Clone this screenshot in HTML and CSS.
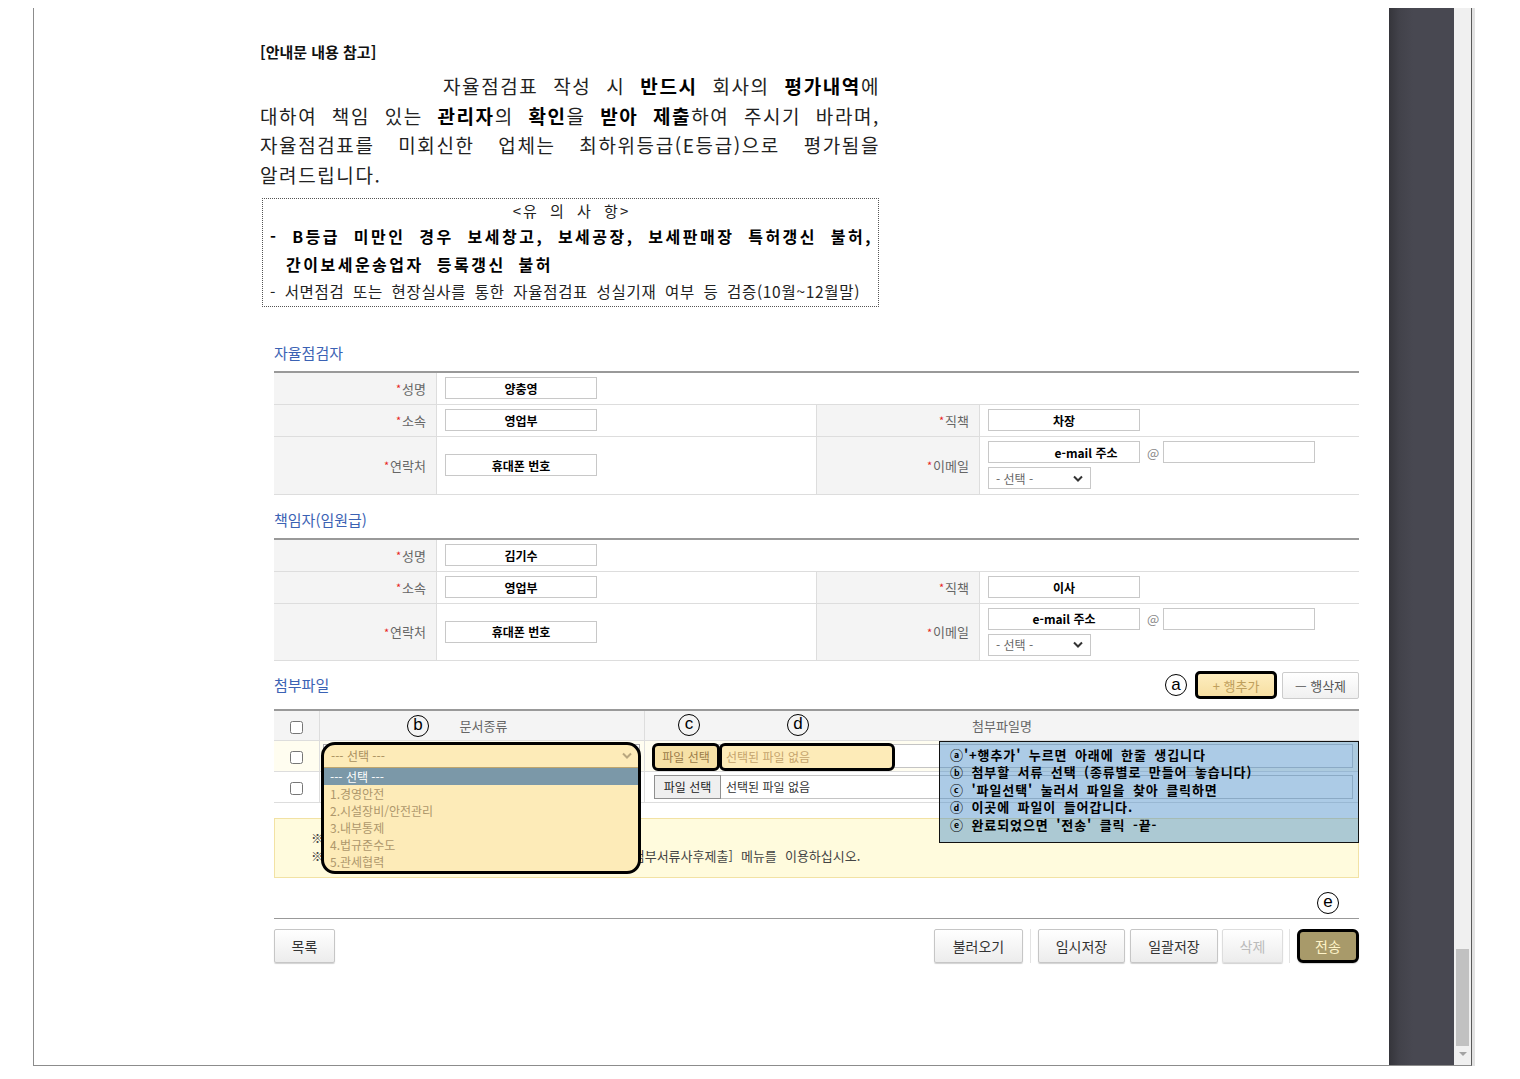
FILE: index.html
```html
<!DOCTYPE html>
<html lang="ko">
<head>
<meta charset="utf-8">
<title>자율점검표</title>
<link rel="stylesheet" href="styles.css">
</head>
<body>
<div class="frame">
  <div class="content">
    <div class="main">
      <div class="intro">
        <p class="intro-title">[안내문 내용 참고]</p>
        <div class="para">
          <div class="pl first">자율점검표 작성 시 <b>반드시</b> 회사의 <b>평가내역</b>에</div>
          <div class="pl">대하여 책임 있는 <b>관리자</b>의 <b>확인</b>을 <b>받아 제출</b>하여 주시기 바라며,</div>
          <div class="pl">자율점검표를 미회신한 업체는 최하위등급(E등급)으로 평가됨을</div>
          <div class="pl last">알려드립니다.</div>
        </div>
        <div class="caution">
          <div class="c-title">&lt;유 의 사 항&gt;</div>
          <div class="c-bold just">- B등급 미만인 경우 보세창고, 보세공장, 보세판매장 특허갱신 불허,</div>
          <div class="c-bold indent">간이보세운송업자 등록갱신 불허</div>
          <div class="c-norm">- 서면점검 또는 현장실사를 통한 자율점검표 성실기재 여부 등 검증(10월~12월말)</div>
        </div>
      </div>

      <div class="form">
        <h3 class="sec-title">자율점검자</h3>
        <div class="ftable">
          <div class="lab"><i>*</i>성명</div>
          <div class="val span3"><input class="inp" type="text" value="양충영"></div>
          <div class="lab"><i>*</i>소속</div>
          <div class="val bd"><input class="inp" type="text" value="영업부"></div>
          <div class="lab"><i>*</i>직책</div>
          <div class="val"><input class="inp" type="text" value="차장"></div>
          <div class="lab"><i>*</i>연락처</div>
          <div class="val bd"><input class="inp" type="text" value="휴대폰 번호"></div>
          <div class="lab"><i>*</i>이메일</div>
          <div class="val email">
            <div class="erow"><input class="inp shift" type="text" value="e-mail 주소"><span class="at">@</span><input class="inp" type="text" value=""></div>
            <div class="sel"><span>- 선택 -</span><svg width="10" height="7" viewBox="0 0 10 7"><path d="M1 1.5 L5 5.5 L9 1.5" fill="none" stroke="#333" stroke-width="2"/></svg></div>
          </div>
        </div>

        <h3 class="sec-title s2">책임자(임원급)</h3>
        <div class="ftable t2">
          <div class="lab"><i>*</i>성명</div>
          <div class="val span3"><input class="inp" type="text" value="김기수"></div>
          <div class="lab"><i>*</i>소속</div>
          <div class="val bd"><input class="inp" type="text" value="영업부"></div>
          <div class="lab"><i>*</i>직책</div>
          <div class="val"><input class="inp" type="text" value="이사"></div>
          <div class="lab"><i>*</i>연락처</div>
          <div class="val bd"><input class="inp" type="text" value="휴대폰 번호"></div>
          <div class="lab"><i>*</i>이메일</div>
          <div class="val email">
            <div class="erow"><input class="inp" type="text" value="e-mail 주소"><span class="at">@</span><input class="inp" type="text" value=""></div>
            <div class="sel"><span>- 선택 -</span><svg width="10" height="7" viewBox="0 0 10 7"><path d="M1 1.5 L5 5.5 L9 1.5" fill="none" stroke="#333" stroke-width="2"/></svg></div>
          </div>
        </div>

        <div class="ahead-row">
          <h3 class="sec-title flat">첨부파일</h3>
          <div class="btns">
            <span class="circ">a</span>
            <button class="btn-add" type="button">+ 행추가</button>
            <button class="btn-del" type="button">— 행삭제</button>
          </div>
        </div>

        <div class="abody">
          <div class="atable">
            <div class="ch hd"><input type="checkbox" class="cb"></div>
            <div class="dt hd t">문서종류</div>
            <div class="hd t">첨부파일명</div>

            <div class="ch r1"><input type="checkbox" class="cb"></div>
            <div class="dt r1"><div class="asel"><span>--- 선택 ---</span></div></div>
            <div class="fc r1"><div class="file"><span class="fbtn">파일 선택</span><span class="fname">선택된 파일 없음</span></div></div>

            <div class="ch"><input type="checkbox" class="cb"></div>
            <div class="dt"><div class="asel"></div></div>
            <div class="fc"><div class="file"><span class="fbtn dk">파일 선택</span><span class="fname">선택된 파일 없음</span></div></div>
          </div>

          <div class="notice">
            <p>※ 첨부파일은 최대 10MB까지 등록 가능합니다.</p>
            <p>※ 자율점검표 제출 기한 이후 추가로 제출할 서류는 [첨부서류사후제출] 메뉴를 이용하십시오.</p>
          </div>

          <span class="circ abs cb-b">b</span>
          <span class="circ abs cb-c">c</span>
          <span class="circ abs cb-d">d</span>

          <div class="dd">
            <div class="dd-sel"><span>--- 선택 ---</span><svg width="10" height="7" viewBox="0 0 10 7"><path d="M1 1.5 L5 5.5 L9 1.5" fill="none" stroke="#b9a77f" stroke-width="2"/></svg></div>
            <div class="dd-list">
              <div class="on">--- 선택 ---</div>
              <div>1.경영안전</div>
              <div>2.시설장비/안전관리</div>
              <div>3.내부통제</div>
              <div>4.법규준수도</div>
              <div>5.관세협력</div>
            </div>
          </div>
          <div class="ann ann-c">파일 선택</div>
          <div class="ann ann-d">선택된 파일 없음</div>

          <div class="blue">
            <div>ⓐ'+행추가' 누르면 아래에 한줄 생깁니다</div>
            <div>ⓑ 첨부할 서류 선택 (종류별로 만들어 놓습니다)</div>
            <div>ⓒ '파일선택' 눌러서 파일을 찾아 클릭하면</div>
            <div>ⓓ 이곳에 파일이 들어갑니다.</div>
            <div>ⓔ 완료되었으면 '전송' 클릭 -끝-</div>
          </div>
        </div>

        <div class="erow2"><span class="circ">e</span></div>
        <div class="btnbar">
          <button class="bt w-list" type="button">목록</button>
          <div class="rgroup">
            <button class="bt w-load" type="button">불러오기</button>
            <span class="sep"></span>
            <button class="bt w-tmp" type="button">임시저장</button>
            <button class="bt w-all" type="button">일괄저장</button>
            <button class="bt w-del dis" type="button">삭제</button>
            <span class="sep s2"></span>
            <button class="bt w-send send" type="button">전송</button>
          </div>
        </div>
      </div>
    </div>
  </div>
  <div class="dark"></div>
  <div class="track">
    <div class="thumb"></div>
    <div class="arrow"></div>
  </div>
</div>
</body>
</html>
```

FILE: styles.css
```css
* { box-sizing: border-box; }

body {
  margin: 0;
  background: #fff;
  font-family: "Noto Sans CJK KR", "Noto Sans", sans-serif;
  color: #333;
}

button, input {
  font-family: "Noto Sans CJK KR", "Noto Sans", sans-serif;
}

.frame {
  margin: 8px 0 0 33px;
  width: 1439px;
  height: 1058px;
  display: flex;
  border-left: 1px solid #8c8c8c;
  border-bottom: 1px solid #8c8c8c;
  border-right: 1px solid #5a5a5a;
  box-shadow: 3px 0 0 #e2e2e2;
}

.content {
  flex: 1;
  overflow: hidden;
  background: #fff;
}

.dark {
  width: 65px;
  background: linear-gradient(to right, #35353b 0, #42424a 10px, #484851 24px, #484851 100%);
}

.track {
  width: 17px;
  background: #f0f0f0;
  display: flex;
  flex-direction: column;
  justify-content: flex-end;
  align-items: center;
  padding-bottom: 9px;
}

.thumb {
  width: 13px;
  height: 97px;
  background: #c1c1c1;
}

.arrow {
  margin-top: 6px;
  width: 0;
  height: 0;
  border-left: 4px solid transparent;
  border-right: 4px solid transparent;
  border-top: 4px solid #a3a3a3;
}

.main {
  margin-left: 226px;
  width: 1100px;
  padding-top: 34px;
}

/* ---------- intro ---------- */
.intro { width: 620px; }

.intro-title {
  margin: 0;
  font-size: 15px;
  font-weight: 700;
  line-height: 20px;
  color: #111;
}

.para {
  margin-top: 9px;
  font-size: 19px;
  line-height: 29.5px;
  letter-spacing: 1.6px;
  color: #222;
}

.para b { color: #000; font-weight: 700; }

.pl {
  text-align: justify;
  text-align-last: justify;
}

.pl.first { padding-left: 183px; }
.pl.last { text-align-last: left; }

.caution {
  margin: 9px 0 0 2px;
  width: 617px;
  border: 1px dotted #555;
  padding: 0 5px 0 7px;
  font-size: 16px;
  color: #222;
}

.c-title {
  line-height: 24px;
  text-align: center;
  font-size: 15px;
  letter-spacing: 2px;
  word-spacing: 5px;
}

.c-bold {
  line-height: 27.5px;
  font-weight: 700;
  letter-spacing: 2.5px;
  color: #000;
}

.just {
  text-align: justify;
  text-align-last: justify;
}

.indent {
  padding-left: 16px;
  word-spacing: 6px;
}

.c-norm {
  line-height: 27.5px;
  font-size: 15.5px;
  letter-spacing: 0.7px;
  word-spacing: 3.5px;
  white-space: nowrap;
}

/* ---------- form ---------- */
.form {
  margin: 36px 0 0 14px;
  width: 1085px;
}

.sec-title {
  margin: 0 0 8px;
  font-size: 15px;
  font-weight: 400;
  line-height: 20px;
  color: #3b62b4;
}

.sec-title.s2 { margin-top: 15px; }
.sec-title.flat { margin: 0; }

.ftable {
  display: grid;
  grid-template-columns: 163px 380px 163px 379px;
  grid-template-rows: 32px 32px 58px;
  border-top: 2px solid #999;
}

.ftable.t2 { grid-template-rows: 32px 32px 57px; }

.ftable > div {
  border-bottom: 1px solid #ddd;
  display: flex;
  align-items: center;
}

.lab {
  background: #f4f4f4;
  border-right: 1px solid #ddd;
  justify-content: flex-end;
  padding-right: 10px;
  font-size: 13px;
  color: #666;
}

.lab i {
  font-style: normal;
  color: #e8231b;
  font-size: 11px;
  margin-right: 1px;
}

.val { padding-left: 8px; }
.val.bd { border-right: 1px solid #ddd; }
.span3 { grid-column: span 3; }

.inp {
  width: 152px;
  height: 22px;
  padding: 0;
  margin: 0;
  border: 1px solid #c8c8c8;
  background: #fff;
  font-size: 12px;
  font-weight: 700;
  color: #000;
  text-align: center;
  outline: none;
}

.inp.shift { padding-left: 44px; }

.ftable > .email {
  flex-direction: column;
  align-items: flex-start;
  justify-content: center;
  gap: 4px;
}

.erow {
  display: flex;
  align-items: center;
}

.at {
  margin: 0 4px 0 7px;
  font-size: 13px;
  color: #888;
}

.sel {
  width: 103px;
  height: 22px;
  border: 1px solid #c8c8c8;
  background: #fff;
  font-size: 12px;
  color: #666;
  display: flex;
  align-items: center;
  justify-content: space-between;
  padding: 0 7px 0 7px;
}

/* ---------- attachments ---------- */
.ahead-row {
  display: flex;
  align-items: center;
  justify-content: space-between;
  height: 29px;
  margin: 10px 0 9px;
}

.btns {
  display: flex;
  align-items: center;
}

.circ {
  display: inline-flex;
  align-items: center;
  justify-content: center;
  width: 22px;
  height: 22px;
  border: 1.5px solid #000;
  border-radius: 50%;
  font-family: "Liberation Sans", "DejaVu Sans", sans-serif;
  font-size: 17px;
  line-height: 1;
  color: #000;
  padding-bottom: 2px;
}

.btn-add {
  margin-left: 8px;
  width: 82px;
  height: 28px;
  padding: 0;
  border: 3px solid #000;
  border-radius: 5px;
  background: linear-gradient(#fdedbf, #f7dfa2);
  color: #bf9f5c;
  font-size: 13px;
}

.btn-del {
  margin-left: 5px;
  width: 77px;
  height: 27px;
  padding: 0;
  border: 1px solid #ccc;
  border-radius: 2px;
  background: linear-gradient(#fff, #f0f0f0);
  color: #555;
  font-size: 13px;
}

.abody { position: relative; }

.atable {
  display: grid;
  grid-template-columns: 46px 325px 714px;
  grid-template-rows: 30px 31px 31px;
  border-top: 2px solid #999;
}

.atable > div {
  border-bottom: 1px solid #ddd;
  display: flex;
  align-items: center;
}

.ch {
  justify-content: center;
  border-right: 1px solid #ddd;
}

.cb {
  margin: 4px 0 0;
  width: 13px;
  height: 13px;
}

.hd { background: #f4f4f4; }

.atable > .t {
  justify-content: center;
  font-size: 13px;
  color: #666;
}

.dt {
  border-right: 1px solid #ddd;
  padding-left: 3px;
}

.fc { padding-left: 9px; }
.atable > .r1 { background: #fffdf0; }

.asel {
  width: 317px;
  height: 24px;
  border: 1px solid #aaa;
  background: #fff;
  font-size: 12px;
  color: #333;
  display: flex;
  align-items: center;
  padding-left: 6px;
}

.file {
  width: 699px;
  height: 24px;
  border: 1px solid #c4c4c4;
  background: #fff;
  display: flex;
  font-size: 12px;
}

.fbtn {
  width: 66px;
  background: #efefef;
  border-right: 1px solid #bbb;
  display: flex;
  align-items: center;
  justify-content: center;
  color: #222;
}

.fbtn.dk { border: 1px solid #8f8f8f; margin: -1px 0 -1px -1px; width: 67px; }

.fname {
  padding-left: 5px;
  display: flex;
  align-items: center;
  color: #333;
}

.notice {
  margin-top: 15px;
  height: 60px;
  border: 1px solid #f2e2a4;
  background: #fffbdd;
  padding: 10px 0 0 36px;
  font-size: 13px;
  line-height: 18px;
  color: #444;
}

.notice p {
  margin: 0;
  white-space: nowrap;
  word-spacing: 4.5px;
}

.circ.abs { position: absolute; z-index: 4; }
.cb-b { left: 133px; top: 6px; }
.cb-c { left: 404px; top: 5px; }
.cb-d { left: 513px; top: 5px; }

.dd {
  position: absolute;
  left: 47px;
  top: 33px;
  width: 320px;
  height: 132px;
  border: 3px solid #000;
  border-radius: 14px;
  background: #fdebb8;
  overflow: hidden;
  z-index: 3;
}

.dd-sel {
  height: 23px;
  border-bottom: 1px solid #bda56e;
  display: flex;
  align-items: center;
  justify-content: space-between;
  padding: 0 6px 0 7px;
  font-size: 12px;
  color: #a8905e;
}

.dd-list > div {
  height: 17px;
  line-height: 17px;
  padding-left: 6px;
  font-size: 12px;
  color: #ae976b;
}

.dd-list > .on {
  background: #7b98a8;
  color: #fff;
}

.ann {
  position: absolute;
  z-index: 3;
  top: 34px;
  height: 28px;
  border: 3px solid #000;
  border-radius: 6px;
  display: flex;
  align-items: center;
  font-size: 12px;
}

.ann-c {
  left: 378px;
  width: 68px;
  background: #f6e1a6;
  color: #9a7b48;
  justify-content: center;
}

.ann-d {
  left: 445px;
  width: 176px;
  background: #fdebb8;
  color: #c5a46c;
  padding-left: 4px;
}

.blue {
  position: absolute;
  left: 665px;
  top: 32px;
  width: 420px;
  height: 102px;
  border: 1px solid #111;
  background: rgba(70, 140, 200, 0.45);
  padding: 4px 0 0 10px;
  font-size: 13px;
  font-weight: 700;
  line-height: 17.5px;
  color: #000;
  letter-spacing: 0.9px;
  word-spacing: 3px;
  white-space: nowrap;
  z-index: 2;
}

/* ---------- bottom buttons ---------- */
.erow2 {
  height: 40px;
  display: flex;
  justify-content: flex-end;
  align-items: flex-start;
  padding: 14px 20px 0 0;
}

.btnbar {
  border-top: 1px solid #999;
  padding-top: 10px;
  display: flex;
  justify-content: space-between;
}

.rgroup {
  display: flex;
  align-items: center;
}

.bt {
  height: 34px;
  padding: 0;
  border: 1px solid #c6c6c6;
  border-radius: 2px;
  background: linear-gradient(#fff, #ececec);
  box-shadow: 0 1px 1px rgba(0, 0, 0, 0.18);
  font-size: 14px;
  color: #333;
}

.w-list { width: 61px; }
.w-load { width: 89px; }
.w-tmp { width: 87px; }
.w-all { width: 88px; margin-left: 5px; }
.w-del { width: 61px; margin-left: 4px; }
.w-send { width: 62px; }

.bt.dis {
  color: #bbb;
  border-color: #ddd;
}

.bt.send {
  border: 3px solid #000;
  border-radius: 6px;
  background: #a89a6a;
  color: #fff4c8;
}

.sep {
  width: 1px;
  height: 34px;
  background: #e3e3e3;
  margin: 0 7px;
}

.sep.s2 { margin: 0 7px 0 6px; }
```
